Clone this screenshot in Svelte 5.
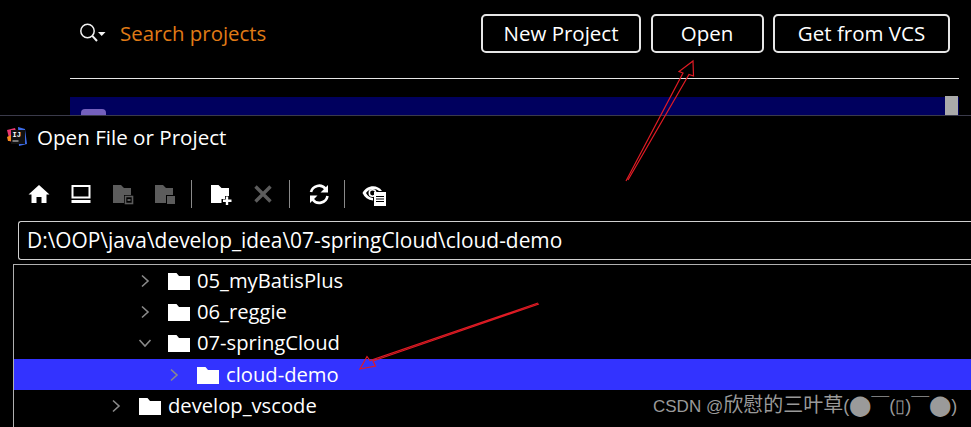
<script lang="ts">
	const tree = [
		{ name: '05_myBatisPlus', depth: 2, open: false, selected: false },
		{ name: '06_reggie', depth: 2, open: false, selected: false },
		{ name: '07-springCloud', depth: 2, open: true, selected: false },
		{ name: 'cloud-demo', depth: 3, open: false, selected: true },
		{ name: 'develop_vscode', depth: 1, open: false, selected: false }
	];
	const buttons = [
		{ label: 'New Project', width: 160 },
		{ label: 'Open', width: 113 },
		{ label: 'Get from VCS', width: 177 }
	];
</script>

<div class="page">
	<section class="welcome">
		<div class="top">
			<svg class="search-icon" width="28" height="24" viewBox="0 0 28 24">
				<circle cx="7.5" cy="10" r="6.7" fill="none" stroke="#f2f2f2" stroke-width="1.5" />
				<path d="M12.3 14.8 L17 20" stroke="#f2f2f2" stroke-width="2" />
				<path d="M18 11 H25.5 L21.7 15 Z" fill="#f2f2f2" />
			</svg>
			<span class="search-text">Search projects</span>
			<div class="buttons">
				{#each buttons as b}
					<button style="width: {b.width}px">{b.label}</button>
				{/each}
			</div>
		</div>
		<div class="divider"></div>
		<div class="recent">
			<div class="avatar"></div>
			<div class="thumb"></div>
		</div>
	</section>

	<section class="dialog">
		<div class="titlebar">
			<svg class="logo" width="22" height="22" viewBox="0 0 22 22">
				<path d="M1 4 L9 2 L11 8 L4 16 Z" fill="#e8366f" />
				<path d="M1 11 L5 9 L5 15 L2 15 Z" fill="#f58a1f" />
				<path d="M12 1 L19 3 L21 18 L13 20 Z" fill="#3d6ce8" />
				<rect x="5" y="4" width="14" height="14" fill="#111" />
				<text x="6.5" y="11" class="logo-text">IJ</text>
				<rect x="6.5" y="14.5" width="6" height="1" fill="#ddd" />
			</svg>
			<span>Open File or Project</span>
		</div>

		<div class="toolbar">
			<svg class="tool" width="24" height="24" viewBox="0 0 24 24">
				<path d="M12 3 L22.5 12.5 H19.5 V21 H14.5 V15 H9.5 V21 H4.5 V12.5 H1.5 Z" fill="#fff" />
			</svg>
			<svg class="tool" width="24" height="24" viewBox="0 0 24 24">
				<path d="M3.5 4 H20.5 V15.5 H3.5 Z" fill="none" stroke="#fff" stroke-width="2" />
				<rect x="2.5" y="18" width="19" height="3" fill="#fff" />
			</svg>
			<svg class="tool" width="24" height="24" viewBox="0 0 24 24">
				<path d="M2 3 H10 L13 6 H20 V13 H13 V21 H2 Z" fill="#5c5c5c" />
				<rect x="14.5" y="14.5" width="7" height="7" fill="none" stroke="#5c5c5c" stroke-width="1.6" />
				<rect x="16.5" y="17" width="3" height="2" fill="#5c5c5c" />
			</svg>
			<svg class="tool" width="24" height="24" viewBox="0 0 24 24">
				<path d="M2 3 H10 L13 6 H20 V13 H13 V21 H2 Z" fill="#5c5c5c" />
				<rect x="14" y="14" width="8" height="8" fill="#5c5c5c" />
			</svg>
			<span class="sep"></span>
			<svg class="tool" width="24" height="24" viewBox="0 0 24 24">
				<path d="M2 3 H9.5 L12.5 6 H20 V14 H16 V17 H12.5 V21 H2 Z" fill="#fff" />
				<path d="M18 14.5 V23 M14 18.7 H22.5" stroke="#fff" stroke-width="2.4" />
			</svg>
			<svg class="tool" width="24" height="24" viewBox="0 0 24 24">
				<path d="M4.5 4.5 L19.5 19.5 M19.5 4.5 L4.5 19.5" stroke="#5c5c5c" stroke-width="3.4" />
			</svg>
			<span class="sep"></span>
			<svg class="tool" width="24" height="24" viewBox="0 0 24 24">
				<path d="M4 10 A8.3 8.3 0 0 1 18.5 6.8" fill="none" stroke="#fff" stroke-width="2.6" />
				<path d="M20.5 14 A8.3 8.3 0 0 1 5.5 17.2" fill="none" stroke="#fff" stroke-width="2.6" />
				<path d="M21 3 V10.5 H13.5 Z M3 21 V13.5 H10.5 Z" fill="#fff" />
			</svg>
			<span class="sep last"></span>
			<svg class="tool" width="26" height="24" viewBox="0 0 26 24">
				<path d="M1.5 11 C5 3.5 16 1.5 21 9 L18 9 C15 6 8 6 5 11 C6.5 14 9 15.5 12 16 V18.5 C7 18 3.5 15.5 1.5 11 Z" fill="#fff" />
				<circle cx="11.5" cy="11" r="3.2" fill="none" stroke="#fff" stroke-width="1.6" />
				<rect x="13" y="10" width="12" height="14" fill="#fff" />
				<path d="M15 14.5 H23 M15 17 H23 M15 19.5 H23" stroke="#000" stroke-width="1.2" />
			</svg>
		</div>

		<div class="path">D:\OOP\java\develop_idea\07-springCloud\cloud-demo</div>

		<div class="tree">
			{#each tree as row}
				<div class="row" class:selected={row.selected} style="padding-left: {row.depth * 29 + 66}px">
					<svg class="chevron" width="14" height="14" viewBox="0 0 14 14">
						{#if row.open}
							<path d="M1.5 4 L7 10 L12.5 4" fill="none" stroke="#8a8a8a" stroke-width="1.6" />
						{:else}
							<path d="M4 1.5 L10 7 L4 12.5" fill="none" stroke="#8a8a8a" stroke-width="1.6" />
						{/if}
					</svg>
					<svg class="folder" width="22" height="18" viewBox="0 0 22 18">
						<path d="M0 1 H8.5 L11 4 H22 V18 H0 Z" fill="#fff" />
					</svg>
					<span class="name">{row.name}</span>
				</div>
			{/each}
		</div>
	</section>

	<svg class="arrows" width="971" height="427" viewBox="0 0 971 427">
		<path d="M626 181 L683 73 L679 71.5 L693 61 L693.5 76 L689 74.5 L628 180" fill="none" stroke="#e01b24" stroke-width="1.2" />
		<path d="M539 304 L373 361 L375.5 366 L360 369 L367 356.5 L370 360.5 L538 303" fill="none" stroke="#e01b24" stroke-width="1.2" />
	</svg>

	<div class="watermark">CSDN @<span class="cjk">欣慰的三叶草</span><span class="face">(<span class="dot">⬤</span>￣(▯)￣<span class="dot">⬤</span>)</span></div>
</div>

<style>
	:global(body) {
		background: #000;
	}
	.page {
		position: relative;
		width: 971px;
		height: 427px;
		overflow: hidden;
		background: #000;
		color: #fff;
		font-family: 'Open Sans', 'Noto Sans', sans-serif;
	}
	.welcome {
		height: 115px;
		padding-left: 70px;
		padding-right: 12px;
		box-sizing: border-box;
	}
	.top {
		display: flex;
		align-items: center;
		height: 78px;
		padding: 0 9px 12px 10px;
		box-sizing: border-box;
	}
	.search-icon {
		margin-right: 12px;
	}
	.search-text {
		color: #e07b16;
		font-size: 20.4px;
	}
	.buttons {
		display: flex;
		gap: 9.5px;
		margin-left: auto;
	}
	button {
		height: 39px;
		background: #000;
		color: #fff;
		border: 2px solid #e6e6e6;
		border-radius: 5px;
		font-family: inherit;
		font-size: 20.5px;
		padding: 0;
	}
	.divider {
		height: 1px;
		background: #e6e6e6;
	}
	.recent {
		position: relative;
		height: 18px;
		margin-top: 18px;
		background: #00005e;
	}
	.avatar {
		position: absolute;
		left: 11px;
		top: 12px;
		width: 25px;
		height: 6px;
		border-radius: 4px 4px 0 0;
		background: #7460bd;
	}
	.thumb {
		position: absolute;
		right: 1px;
		top: -1px;
		width: 13px;
		height: 19px;
		background: #aaa;
	}
	.dialog {
		border-top: 1px solid #3a3a4a;
	}
	.titlebar {
		display: flex;
		align-items: center;
		gap: 9px;
		height: 43px;
		padding: 0 0 2px 6px;
		box-sizing: border-box;
		font-size: 20.6px;
	}
	.logo-text {
		font: 700 7px 'Liberation Mono', monospace;
		fill: #fff;
	}
	.toolbar {
		display: flex;
		align-items: center;
		gap: 18px;
		height: 28px;
		margin-top: 21px;
		padding-left: 27px;
	}
	.sep {
		width: 1px;
		height: 28px;
		margin: 0 -1px 0 -4px;
		background: #8a8a8a;
	}
	.sep.last {
		margin: 0 -2px 0 -5px;
	}
	.path {
		height: 39px;
		line-height: 37px;
		margin: 13px 0 0 18px;
		padding-left: 8px;
		box-sizing: border-box;
		border: 1px solid #d0d0d0;
		border-right: 0;
		border-radius: 3px 0 0 3px;
		font-size: 20.9px;
	}
	.tree {
		margin: 4px 0 0 13px;
		border-top: 1px solid #b0b0b0;
		border-left: 1px solid #b0b0b0;
		height: 170px;
	}
	.row {
		display: flex;
		align-items: center;
		height: 31.33px;
		font-size: 20.2px;
	}
	.row.selected {
		background: #3333ff;
	}
	.chevron {
		margin-right: 16px;
	}
	.folder {
		margin-right: 7px;
	}
	.name {
		padding-bottom: 2px;
	}
	.arrows {
		position: absolute;
		left: 0;
		top: 0;
		pointer-events: none;
	}
	.watermark {
		position: absolute;
		left: 653px;
		top: 390px;
		line-height: 30px;
		font-family: 'Liberation Sans', 'Noto Sans CJK SC', sans-serif;
		font-size: 17px;
		color: #9a9a9a;
		white-space: nowrap;
	}
	.cjk {
		font-size: 20px;
	}
	.face {
		font-size: 18px;
	}
	.dot {
		font-size: 20px;
	}
</style>
